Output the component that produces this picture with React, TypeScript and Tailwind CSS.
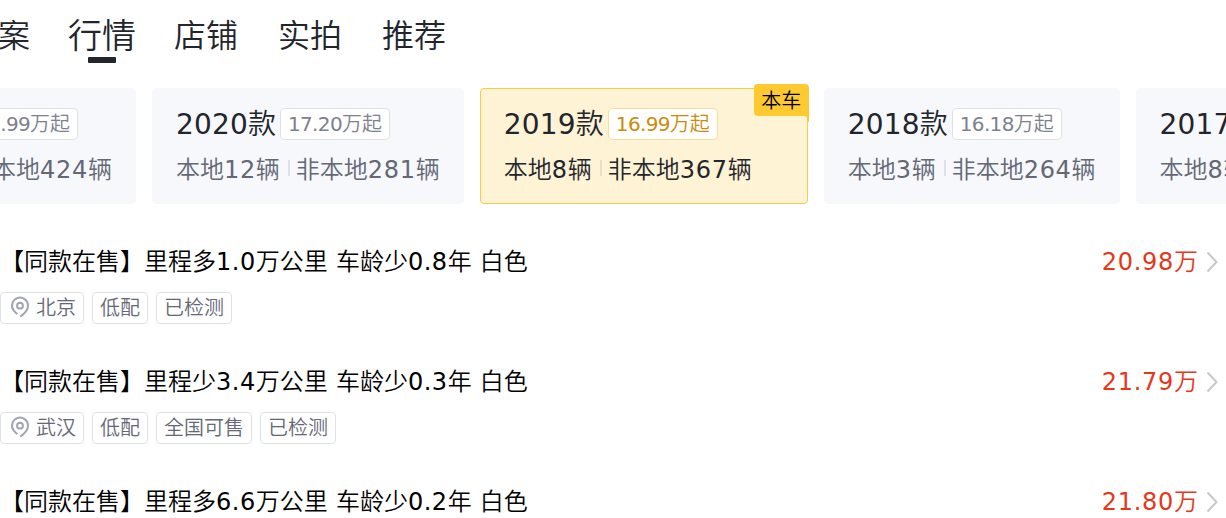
import React from 'react';
import clsx from 'clsx';

const tabs = ['方案', '行情', '店铺', '实拍', '推荐'];
const activeTab = '行情';

const years = [
  { year: '2021', price: '17.99', local: 5, other: 424 },
  { year: '2020', price: '17.20', local: 12, other: 281 },
  { year: '2019', price: '16.99', local: 8, other: 367, current: true },
  { year: '2018', price: '16.18', local: 3, other: 264 },
  { year: '2017', price: '15.28', local: 8, other: 216 },
];

const cars = [
  { title: '【同款在售】里程多1.0万公里 车龄少0.8年 白色', price: '20.98', city: '北京', tags: ['低配', '已检测'] },
  { title: '【同款在售】里程少3.4万公里 车龄少0.3年 白色', price: '21.79', city: '武汉', tags: ['低配', '全国可售', '已检测'] },
  { title: '【同款在售】里程多6.6万公里 车龄少0.2年 白色', price: '21.80', city: '上海', tags: ['低配', '已检测'] },
];

// Latin runs get their own tracking, the Chinese glyphs stay on the em grid
const Mixed = ({ text, tracking }: { text: string; tracking: string }) => (
  <>
    {text.split(/([\x20-\x7e]+)/).map((part, i) => (
      <span key={i} className={i % 2 ? tracking : undefined}>{part}</span>
    ))}
  </>
);

const PinIcon = () => (
  <svg className="w-7 h-8 shrink-0" viewBox="0 0 28 32" fill="none" stroke="#a0a5b1" strokeWidth="2">
    <path d="M12.3 24.6C15.5 22.3 20 18.5 20 13.7A8 8 0 1 0 6 18.9L9.3 22.2" />
    <circle cx="12" cy="13.7" r="2.9" />
  </svg>
);

const Tag = ({ children }: { children: React.ReactNode }) => (
  <span className="flex items-center h-8 px-[7px] border border-[#dfe1e8] rounded text-xl leading-[30px] text-[#646876]">
    {children}
  </span>
);

const App = () => {
  return (
    <div className="w-full h-[518px] overflow-hidden bg-white text-[#22252b] whitespace-nowrap font-['DejaVu_Sans','Noto_Sans_CJK_SC_DemiLight','Noto_Sans_CJK_SC',sans-serif]">
      <nav className="flex gap-10 h-[88px] -ml-[34px]">
        {tabs.map((tab) => (
          <div key={tab} className="flex flex-col items-center w-16 shrink-0 pt-[11px]">
            <span className={clsx('h-[46px] leading-[50px]', tab === activeTab ? 'text-[34px]' : 'text-[32px]')}>{tab}</span>
            {tab === activeTab && <span className="w-7 h-1.5 rounded-[1px] bg-[#22252b]" />}
          </div>
        ))}
      </nav>

      <section className="flex gap-4 -ml-[160px]">
        {years.map((item) => (
          <div
            key={item.year}
            className={clsx(
              'relative shrink-0 h-[116px] border rounded pl-[23px] pt-[19px]',
              item.current ? 'pr-[55px] bg-[#fff3d6] border-[#f3cd45]' : 'pr-[23px] bg-[#f6f8fc] border-[#f6f8fc]'
            )}
          >
            <div className="flex h-8 gap-1">
              <span className="text-[28px] leading-[34px]">
                <Mixed text={item.year + '款'} tracking="tracking-[0.19px]" />
              </span>
              <span
                className={clsx(
                  'h-8 px-[7px] border rounded bg-white text-xl leading-[30px]',
                  item.current ? 'border-[#f7df9b] text-[#cb8b0b]' : 'border-[#dfe1e8] text-[#7d818c]'
                )}
              >
                <Mixed text={item.price + '万起'} tracking="tracking-[-0.65px]" />
              </span>
            </div>
            <div className={clsx('flex items-center h-9 mt-3 text-2xl', item.current ? 'text-[#22252b]' : 'text-[#646876]')}>
              <span><Mixed text={`本地${item.local}辆`} tracking="tracking-[0.7px]" /></span>
              <span className={clsx('w-0.5 h-4 ml-2 mr-1.5 mb-1', item.current ? 'bg-[#eadfc5]' : 'bg-[#dfe1e8]')} />
              <span><Mixed text={`非本地${item.other}辆`} tracking="tracking-[0.7px]" /></span>
            </div>
            {item.current && (
              <div className="absolute -top-[5px] -right-[2px]">
                <span className="block w-[55px] h-8 rounded-t rounded-bl bg-[#ffca30] text-center text-xl leading-[35px] text-black">本车</span>
                <svg className="absolute right-0 top-8 w-1.5 h-1.5" viewBox="0 0 6 6">
                  <path d="M0 0H6V6H5C5 2 4 0 0 0Z" fill="#ffca30" />
                </svg>
              </div>
            )}
          </div>
        ))}
      </section>

      <section className="flex flex-col pt-10">
        {cars.map((car) => (
          <article key={car.price} className="h-[120px]">
            <div className="flex items-center justify-between h-9 text-2xl">
              <h3 className="text-black"><Mixed text={car.title} tracking="tracking-[0.52px]" /></h3>
              <div className="flex items-center text-[#e5381b]">
                <Mixed text={car.price + '万'} tracking="tracking-[0.7px]" />
                <svg className="w-3 h-6 ml-2 mr-2" viewBox="0 0 12 24" fill="none" stroke="#c5c8cf" strokeWidth="2">
                  <path d="M1.5 2.5L10.5 12L1.5 21.5" />
                </svg>
              </div>
            </div>
            <div className="flex gap-2 mt-3">
              <Tag><PinIcon />{car.city}</Tag>
              {car.tags.map((tag) => <Tag key={tag}>{tag}</Tag>)}
            </div>
          </article>
        ))}
      </section>
    </div>
  );
};

export default App;
